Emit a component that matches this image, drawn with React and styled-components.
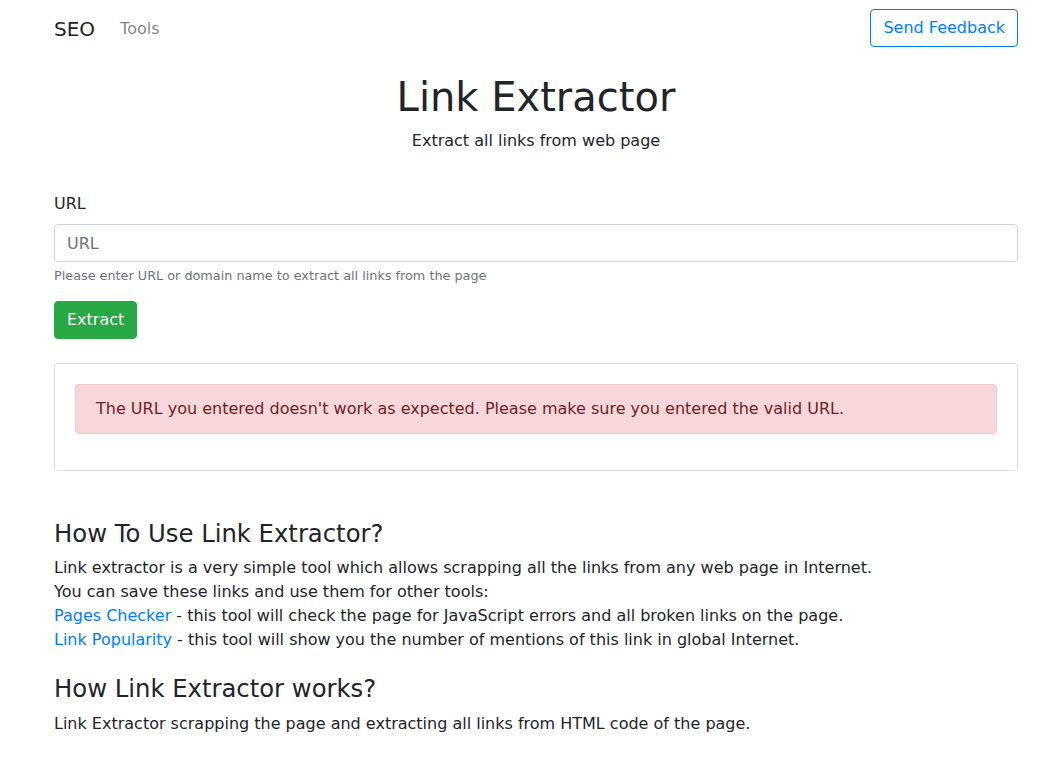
import styled, { createGlobalStyle } from "styled-components";

const GlobalStyle = createGlobalStyle`
  body {
    margin: 0;
    background: #fff;
    color: #212529;
    font-family: "DejaVu Sans", "Noto Sans", sans-serif;
    font-size: 16px;
    line-height: 1.5;
  }
  * { box-sizing: border-box; }
`;

const Page = styled.div`
  padding: 0 29px 0 54px;
`;

const Navbar = styled.nav`
  display: flex;
  align-items: center;
  justify-content: space-between;
  height: 56px;
`;

const NavLeft = styled.div`
  display: flex;
  align-items: center;
  gap: 25px;
`;

const Brand = styled.span`
  font-size: 20px;
  color: #212529;
  margin-top: 1px;
`;

const NavLink = styled.a`
  color: rgba(0, 0, 0, 0.5);
  text-decoration: none;
  margin-top: 1px;
`;

const OutlineButton = styled.button`
  font-family: inherit;
  font-size: 16px;
  line-height: 1.5;
  color: #007bff;
  background: transparent;
  border: 1px solid #007bff;
  border-radius: 4px;
  padding: 6px 12px;
`;

const Hero = styled.header`
  text-align: center;
  margin-top: 17px;
`;

const Title = styled.h1`
  margin: 0;
  font-size: 40px;
  font-weight: 400;
  line-height: 1.2;
`;

const Lead = styled.p`
  margin: 8px 0 0;
`;

const FormGroup = styled.div`
  margin-top: 39px;
`;

const Label = styled.label`
  display: block;
  margin-bottom: 8px;
`;

const Input = styled.input`
  display: block;
  width: 100%;
  height: 38px;
  padding: 6px 12px;
  font-family: inherit;
  font-size: 16px;
  color: #495057;
  border: 1px solid #ced4da;
  border-radius: 4px;
  &::placeholder { color: #6c757d; }
`;

const Help = styled.small`
  display: block;
  margin-top: 4px;
  font-size: 12.8px;
  color: #6c757d;
`;

const Button = styled.button`
  margin-top: 16px;
  font-family: inherit;
  font-size: 16px;
  line-height: 1.5;
  color: #fff;
  background: ${(p) => p.bg || "#28a745"};
  border: 1px solid ${(p) => p.bg || "#28a745"};
  border-radius: 4px;
  padding: 6px 12px;
`;

const Card = styled.div`
  margin-top: 24px;
  border: 1px solid rgba(0, 0, 0, 0.125);
  border-radius: 4px;
  padding: 20px;
`;

const Alert = styled.div`
  background: #f8d7da;
  border: 1px solid #f5c6cb;
  color: #721c24;
  border-radius: 4px;
  padding: 12px 20px;
  margin-bottom: 16px;
`;

const Section = styled.section`
  margin-top: ${(p) => p.top || "48px"};
`;

const Heading = styled.h3`
  margin: 0 0 8px;
  font-size: 24.3px;
  font-weight: 400;
  line-height: 1.2;
`;

const Text = styled.p`
  margin: 0;
`;

const Link = styled.a`
  color: #007bff;
  text-decoration: none;
`;

export default function App() {
  return (
    <>
      <GlobalStyle />
      <Page>
        <Navbar>
          <NavLeft>
            <Brand>SEO</Brand>
            <NavLink href="#">Tools</NavLink>
          </NavLeft>
          <OutlineButton>Send Feedback</OutlineButton>
        </Navbar>

        <Hero>
          <Title>Link Extractor</Title>
          <Lead>Extract all links from web page</Lead>
        </Hero>

        <FormGroup>
          <Label>URL</Label>
          <Input placeholder="URL" />
          <Help>Please enter URL or domain name to extract all links from the page</Help>
          <Button>Extract</Button>
        </FormGroup>

        <Card>
          <Alert>
            The URL you entered doesn't work as expected. Please make sure you entered the valid URL.
          </Alert>
        </Card>

        <Section>
          <Heading>How To Use Link Extractor?</Heading>
          <Text>
            Link extractor is a very simple tool which allows scrapping all the links from any web page in Internet.
            <br />
            You can save these links and use them for other tools:
            <br />
            <Link href="#">Pages Checker</Link> - this tool will check the page for JavaScript errors and all broken links on the page.
            <br />
            <Link href="#">Link Popularity</Link> - this tool will show you the number of mentions of this link in global Internet.
          </Text>
        </Section>

        <Section top="22px">
          <Heading>How Link Extractor works?</Heading>
          <Text>Link Extractor scrapping the page and extracting all links from HTML code of the page.</Text>
        </Section>
      </Page>
    </>
  );
}
